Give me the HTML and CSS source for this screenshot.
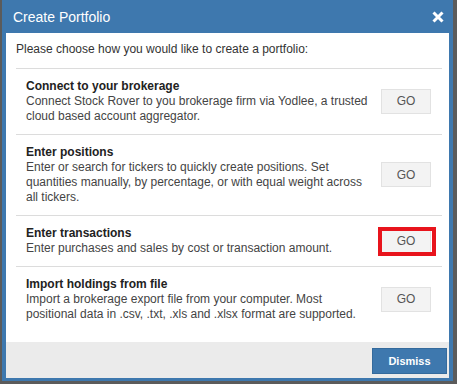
FILE: index.html
```html
<!DOCTYPE html>
<html lang="en">
<head>
    <meta charset="UTF-8">
    <title>Create Portfolio</title>
    <link rel="stylesheet" href="styles.css">
</head>
<body>
    <div class="dialog">
        <header class="dialog-header">
            <h1>Create Portfolio</h1>
            <button class="close" type="button" aria-label="Close">
                <svg width="12" height="12" viewBox="0 0 12 12"><path d="M1.5 1.5 L10.5 10.5 M10.5 1.5 L1.5 10.5" stroke="#fff" stroke-width="3"/></svg>
            </button>
        </header>

        <main class="dialog-body">
            <p class="intro">Please choose how you would like to create a portfolio:</p>

            <div class="option">
                <div class="option-text">
                    <h2>Connect to your brokerage</h2>
                    <p>Connect Stock Rover to you brokerage firm via Yodlee, a trusted cloud based account aggregator.</p>
                </div>
                <div class="go-wrap"><button class="go" type="button">GO</button></div>
            </div>

            <div class="option">
                <div class="option-text">
                    <h2>Enter positions</h2>
                    <p>Enter or search for tickers to quickly create positions. Set quantities manually, by percentage, or with equal weight across all tickers.</p>
                </div>
                <div class="go-wrap"><button class="go" type="button">GO</button></div>
            </div>

            <div class="option">
                <div class="option-text">
                    <h2>Enter transactions</h2>
                    <p>Enter purchases and sales by cost or transaction amount.</p>
                </div>
                <div class="go-wrap">
                    <button class="go" type="button">GO</button>
                    <span class="highlight"></span>
                </div>
            </div>

            <div class="option">
                <div class="option-text">
                    <h2>Import holdings from file</h2>
                    <p>Import a brokerage export file from your computer. Most positional data in .csv, .txt, .xls and .xlsx format are supported.</p>
                </div>
                <div class="go-wrap"><button class="go" type="button">GO</button></div>
            </div>
        </main>

        <footer class="dialog-footer">
            <button class="dismiss" type="button">Dismiss</button>
        </footer>
    </div>
</body>
</html>
```

FILE: styles.css
```css
body {
    margin: 0;
    background-color: #5b5b5b;
    font-family: 'Liberation Sans', Arial, sans-serif;
    color: #333;
}

.dialog {
    box-sizing: border-box;
    width: 451px;
    margin-left: 2px;
    border: 4px solid #3e78ae;
    border-top: 0;
    border-bottom-width: 3px;
    background-color: #fff;
}

.dialog-header {
    display: flex;
    align-items: center;
    justify-content: space-between;
    height: 33px;
    padding: 0 5px 0 7px;
    background-color: #3e78ae;
}

.dialog-header h1 {
    margin: 0;
    font-size: 14px;
    font-weight: normal;
    color: #fff;
}

.close {
    display: flex;
    padding: 0;
    margin-top: 1px;
    border: none;
    background: none;
}

.dialog-body {
    padding: 9px 7px 10px 10px;
}

.intro {
    margin: 0 0 11px;
    font-size: 12px;
    line-height: 15px;
}

.option {
    display: flex;
    align-items: center;
    gap: 12px;
    padding: 9px 11px 10px 10px;
    border-top: 1px solid #dcdcdc;
}

.option-text {
    flex: 1;
}

.option-text h2 {
    margin: 0;
    font-size: 12px;
    line-height: 16px;
    color: #222;
}

.option-text p {
    margin: 0;
    font-size: 12px;
    line-height: 15px;
    color: #444;
}

.go-wrap {
    position: relative;
}

.go {
    display: block;
    width: 50px;
    height: 25px;
    padding: 0;
    border: 1px solid #e2e2e2;
    background-color: #f3f3f3;
    font-family: inherit;
    font-size: 12px;
    color: #555;
}

.highlight {
    position: absolute;
    left: -3px;
    top: -1px;
    width: 58px;
    height: 29px;
    box-sizing: border-box;
    border: 4px solid #e8141c;
}

.dialog-footer {
    display: flex;
    justify-content: flex-end;
    height: 36px;
    box-sizing: border-box;
    padding: 6px 2px 0 0;
    background-color: #ebebeb;
}

.dismiss {
    width: 75px;
    height: 26px;
    border: 1px solid #346a9c;
    background-color: #3e78ae;
    color: #fff;
    font-family: inherit;
    font-size: 11px;
    font-weight: bold;
}
```
